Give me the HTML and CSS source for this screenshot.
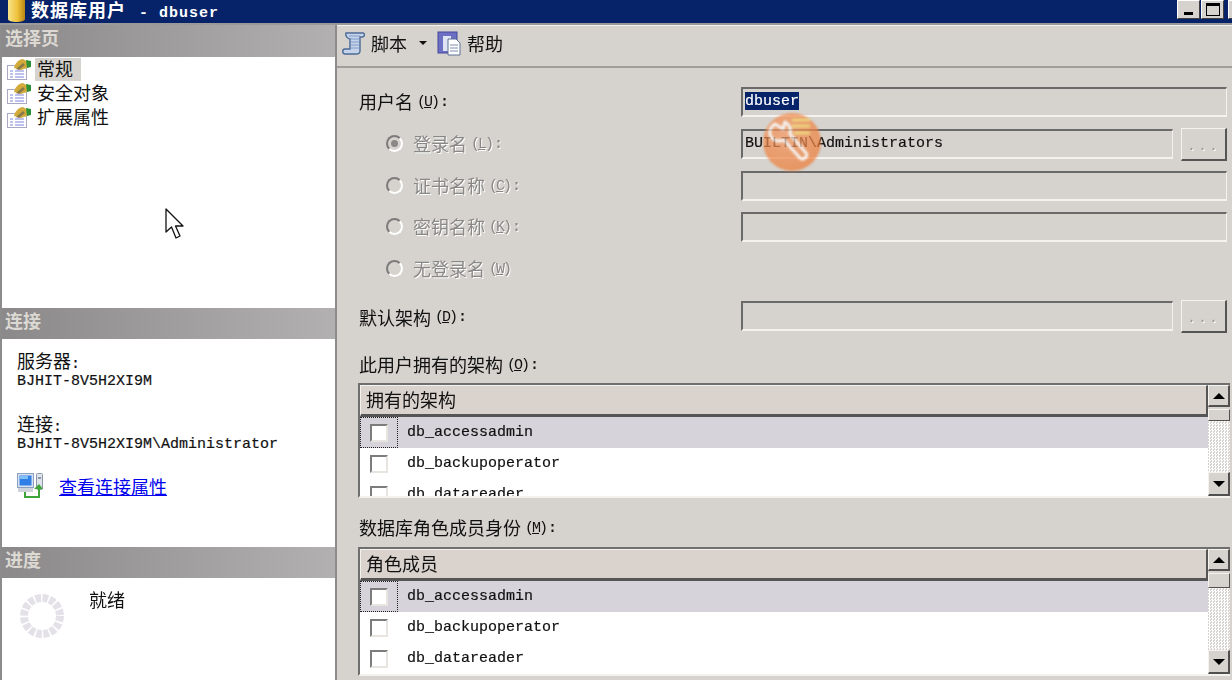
FILE: index.html
```html
<!DOCTYPE html>
<html lang="zh-CN">
<head>
<meta charset="utf-8">
<title>数据库用户 - dbuser</title>
<link rel="stylesheet" href="styles.css">
</head>
<body>
<svg class="defs" width="0" height="0" aria-hidden="true">
  <symbol id="page" viewBox="0 0 26 24">
    <rect x="2.500" y="8.500" width="19" height="14" fill="#fff" stroke="#a9a9c4"/>
    <path d="M5 14h3M5 17h3M5 20h3M10 14h9M10 17h9M10 20h9" stroke="#a8aee6" stroke-width="1.500"/>
    <path d="M9 11 C10 6 14 2 18 2 L23 5 L22 11 L16 13 Z" fill="#d2ab3a"/>
    <path d="M11 12 L18 6 L20 8 L14 13 Z" fill="#8b7a4a"/>
    <path d="M21 3 L26 4 L26 10 L22 11 Z" fill="#2f8f34"/>
  </symbol>
</svg>
<div class="window">
  <header class="titlebar">
    <svg class="dbicon" width="19" height="23" viewBox="0 0 19 23">
      <defs><linearGradient id="gold" x1="0" x2="1" y1="0" y2="0"><stop offset="0" stop-color="#f7e48a"/><stop offset=".55" stop-color="#efc23c"/><stop offset="1" stop-color="#b98412"/></linearGradient></defs>
      <path d="M1 0H18V19C18 21 14 22 9.500 22S1 21 1 19Z" fill="url(#gold)"/>
    </svg>
    <span class="title"><span>数据库用户</span><span class="title-mono"> - dbuser</span></span>
    <div class="winbtns">
      <button class="winbtn"><i class="gl-min"></i></button>
      <button class="winbtn"><i class="gl-max"></i></button>
      <button class="winbtn"></button>
    </div>
  </header>
  <div class="content">
    <aside class="sidebar">
      <h2 class="sec-head sec-first">选择页</h2>
      <ul class="pages">
        <li class="page"><svg class="page-ic" width="26" height="24"><use href="#page"/></svg><span class="page-txt sel">常规</span></li>
        <li class="page"><svg class="page-ic" width="26" height="24"><use href="#page"/></svg><span class="page-txt">安全对象</span></li>
        <li class="page"><svg class="page-ic" width="26" height="24"><use href="#page"/></svg><span class="page-txt">扩展属性</span></li>
      </ul>
      <h2 class="sec-head">连接</h2>
      <div class="conn">
        <div class="c-label">服务器<span class="mono">:</span></div>
        <div class="mono c-val">BJHIT-8V5H2XI9M</div>
        <div class="c-label c-gap">连接<span class="mono">:</span></div>
        <div class="mono c-val">BJHIT-8V5H2XI9M\Administrator</div>
        <div class="c-link">
          <svg width="26" height="26" viewBox="0 0 26 26">
            <rect x=".5" y=".5" width="16" height="14" fill="#d8e2f2" stroke="#8aa0c0"/>
            <rect x="2.500" y="2.500" width="12" height="10" fill="#2f7fe6"/>
            <rect x="3" y="3" width="8" height="3" fill="#7fc0f5"/>
            <rect x="1" y="15" width="15" height="4" fill="#cfd4dc"/>
            <rect x="19.500" y=".5" width="6" height="16" rx="1" fill="#dfe3ea" stroke="#8d96a8"/>
            <rect x="21" y="4" width="3" height="2" fill="#8d96a8"/>
            <path d="M8 19v5h14v-9" fill="none" stroke="#3fa53a" stroke-width="2"/>
            <path d="M17 16l5-5 4 5z" fill="#3fa53a"/>
          </svg>
          <a href="#" class="link">查看连接属性</a>
        </div>
      </div>
      <h2 class="sec-head">进度</h2>
      <div class="progress">
        <svg width="46" height="46" viewBox="0 0 46 46"><circle class="spin" cx="23" cy="23" r="18"/></svg>
        <span>就绪</span>
      </div>
    </aside>
    <main class="main">
      <div class="toolbar">
        <svg width="24" height="24" viewBox="0 0 24 24">
          <path d="M4 2H21C23 2 23 6 20 6H18V20C18 22 16 23 14 23H3C0 23 0 18 3 18H8V8C6 8 3 5 4 2Z" fill="#c6d4ea" stroke="#4c6a96" stroke-width="1.400"/>
          <path d="M7 5h11M9 8h8M9 11h8M9 14h8M9 17h8" stroke="#7f9ac8"/>
        </svg>
        <span class="tb-txt">脚本</span>
        <i class="tb-arrow"></i>
        <svg class="tb-help" width="25" height="25" viewBox="0 0 25 25">
          <rect x="1" y="1" width="19" height="21" fill="#6c6fc4" stroke="#44479a"/>
          <path d="M6 5h8v15H6z" fill="#dfe3f4"/>
          <path d="M11 8h8l4 4v12H11z" fill="#fff" stroke="#5b7096"/>
          <path d="M13 14h8M13 17h8M13 20h8" stroke="#7c8cb0"/>
        </svg>
        <span class="tb-txt">帮助</span>
      </div>
      <div class="form">
        <div class="row">
          <label class="lbl">用户名 <span class="key">(<u>U</u>)</span><span class="mono">:</span></label>
          <div class="field"><div class="input"><span class="hl">dbuser</span></div></div>
        </div>
        <div class="row row-g">
          <label class="lbl lbl-r off"><i class="radio on"></i>登录名 <span class="key">(<u>L</u>)</span><span class="mono">:</span></label>
          <div class="field"><div class="input">BUILTIN\Administrators</div><button class="dots">...</button></div>
        </div>
        <div class="row row-g">
          <label class="lbl lbl-r off"><i class="radio"></i>证书名称 <span class="key">(<u>C</u>)</span><span class="mono">:</span></label>
          <div class="field"><div class="input"></div></div>
        </div>
        <div class="row row-s">
          <label class="lbl lbl-r off"><i class="radio"></i>密钥名称 <span class="key">(<u>K</u>)</span><span class="mono">:</span></label>
          <div class="field"><div class="input"></div></div>
        </div>
        <div class="row row-g">
          <label class="lbl lbl-r off"><i class="radio"></i>无登录名 <span class="key">(<u>W</u>)</span></label>
        </div>
        <div class="row row-l">
          <label class="lbl">默认架构 <span class="key">(<u>D</u>)</span><span class="mono">:</span></label>
          <div class="field"><div class="input"></div><button class="dots">...</button></div>
        </div>
        <div class="cap cap-a">此用户拥有的架构 <span class="key">(<u>O</u>)</span><span class="mono">:</span></div>
        <div class="grid grid-a">
          <div class="g-list">
            <div class="g-head">拥有的架构</div>
            <div class="g-row cur"><span class="g-chk"><i class="chk"></i></span><span class="mono">db_accessadmin</span></div>
            <div class="g-row"><span class="g-chk"><i class="chk"></i></span><span class="mono">db_backupoperator</span></div>
            <div class="g-row"><span class="g-chk"><i class="chk"></i></span><span class="mono">db_datareader</span></div>
          </div>
          <div class="sbar">
            <button class="sb-btn"><i class="tri-up"></i></button>
            <span class="thumb"></span>
            <span class="track"></span>
            <button class="sb-btn"><i class="tri-dn"></i></button>
          </div>
        </div>
        <div class="cap cap-b">数据库角色成员身份 <span class="key">(<u>M</u>)</span><span class="mono">:</span></div>
        <div class="grid grid-b">
          <div class="g-list">
            <div class="g-head">角色成员</div>
            <div class="g-row cur"><span class="g-chk"><i class="chk"></i></span><span class="mono">db_accessadmin</span></div>
            <div class="g-row"><span class="g-chk"><i class="chk"></i></span><span class="mono">db_backupoperator</span></div>
            <div class="g-row"><span class="g-chk"><i class="chk"></i></span><span class="mono">db_datareader</span></div>
          </div>
          <div class="sbar">
            <button class="sb-btn"><i class="tri-up"></i></button>
            <span class="thumb"></span>
            <span class="track"></span>
            <button class="sb-btn"><i class="tri-dn"></i></button>
          </div>
        </div>
      </div>
    </main>
  </div>
  <svg class="badge" width="60" height="60" viewBox="0 0 60 60">
    <defs><radialGradient id="org" cx=".4" cy=".35" r=".75"><stop offset="0" stop-color="#f59a66"/><stop offset="1" stop-color="#ec7a34"/></radialGradient></defs>
    <circle cx="30" cy="30" r="29" fill="url(#org)"/>
    <path d="M30 8h18M30 14h18M32 21h16" stroke="#f8dc60" stroke-width="2.500"/>
    <path d="M13 12C7 16 6 23 11 27C15 30 19 29 22 28L38 46C41 49 47 44 44 41L28 22C29 18 28 13 23 10L21 17L13 12Z" fill="none" stroke="#fff" stroke-width="3" stroke-linejoin="round"/>
  </svg>
  <svg class="cursor" width="20" height="32" viewBox="0 0 20 32">
    <path d="M1 1V24L6.500 19L11 30L15 28L10.500 18H18Z" fill="#fff" stroke="#111" stroke-width="1.300" stroke-linejoin="round"/>
  </svg>
</div>
</body>
</html>
```
FILE: styles.css
```css
* { box-sizing: border-box; }
html, body { margin: 0; padding: 0; }
body {
  width: 1232px;
  height: 680px;
  overflow: hidden;
  background: #d6d3ce;
  font-family: "Noto Sans CJK SC", "Liberation Sans", sans-serif;
  font-size: 18px;
  line-height: 20px;
  color: #111;
}
.defs { position: absolute; }
.mono { font-family: "Liberation Mono", "Noto Sans CJK SC", monospace; font-size: 15px; -webkit-text-stroke: .2px currentColor; }
.window { position: relative; width: 1232px; height: 680px; overflow: hidden; display: flex; flex-direction: column; filter: blur(.4px); }

.titlebar { height: 23px; flex: none; display: flex; align-items: flex-start; background: #06236a; color: #fff; padding-left: 7px; overflow: hidden; }
.title { margin-left: 5px; font-weight: 700; line-height: 19px; letter-spacing: 1px; white-space: pre; }
.title-mono { font-family: "Liberation Mono", monospace; font-size: 15px; margin-left: 3px; }
.winbtns { margin-left: auto; margin-right: -19px; display: flex; gap: 1px; flex: none; }
.winbtn { width: 23px; height: 19px; padding: 0; margin: 0; background: #d6d3ce; border: 1px solid; border-color: #fff #404040 #404040 #fff; display: flex; align-items: center; justify-content: center; }
.winbtn:last-child { margin-left: 3px; }
.gl-min { width: 9px; height: 3px; background: #000; margin-top: 8px; }
.gl-max { width: 14px; height: 13px; border: 1px solid #000; border-top-width: 3px; }

.content { flex: 1; min-height: 0; display: flex; border-top: 2px solid #9a9a9a; }
.sidebar { width: 337px; flex: none; display: flex; flex-direction: column; background: #fff; border-left: 2px solid #8c8c8c; border-right: 2px solid #8c8c8c; }
.sec-head { height: 31px; margin: 0; padding: 0 0 0 3px; flex: none; font-size: 18px; line-height: 25px; font-weight: 700; color: #dcd8d2; background: linear-gradient(90deg, #8b898a, #b2b0b1); }
.sec-first { height: 32px; }
.pages { list-style: none; margin: 0; padding: 0; height: 251px; flex: none; }
.pages .page { height: 24px; display: flex; align-items: flex-start; padding-left: 3px; }
.page-ic { flex: none; }
.page-txt { margin: 1px 0 0 4px; padding: 0 8px 0 2px; height: 23px; line-height: 21px; }
.page-txt.sel { background: #d6d3ce; }
.conn { height: 208px; flex: none; padding: 11px 0 0 15px; }
.c-label { line-height: 20px; }
.c-val { line-height: 18px; margin-top: -2px; white-space: nowrap; }
.c-gap { margin-top: 22px; }
.c-link { display: flex; align-items: center; gap: 16px; margin-top: 19px; }
.link { color: #0000ee; text-decoration: underline; line-height: 24px; }
.progress { flex: 1; display: flex; align-items: flex-start; padding: 15px 0 0 17px; }
.progress span { margin-left: 24px; margin-top: -2px; line-height: 16px; }
.spin { fill: none; stroke: #e4e2e8; stroke-width: 8; stroke-dasharray: 5.5 1.57; }

.main { flex: 1; min-width: 0; display: flex; flex-direction: column; border-top: 1px solid #f4f2ee; }
.toolbar { height: 42px; flex: none; display: flex; align-items: center; padding: 0 0 6px 5px; border-bottom: 2px solid #a09e9a; }
.tb-txt { margin-left: 5px; }
.tb-arrow { margin-left: 12px; border: 4px solid transparent; border-top: 4px solid #111; border-bottom: 0; }
.tb-help { margin-left: 10px; }
.form { padding: 19px 2px 0 21px; }
.row { display: grid; grid-template-columns: 383px 1fr; align-items: center; height: 30px; padding-right: 3px; }
.row-g { margin-top: 12px; }
.row-s { margin-top: 11px; }
.row-l { margin-top: 17px; }
.lbl { padding-left: 1px; margin-bottom: 2px; white-space: nowrap; display: flex; align-items: center; }
.row-l .lbl { margin-bottom: 0; margin-top: 1px; }
.lbl .key, .lbl .mono, .cap .key, .cap .mono { margin-top: 3px; }
.lbl-r { padding-left: 28px; }
.off { color: #8a8886; text-shadow: 1px 1px 0 #fff; }
.key { font-family: "Liberation Mono", monospace; font-size: 15px; letter-spacing: -2px; margin: 0 2px 0 4px; }
.field { display: flex; gap: 8px; height: 30px; }
.input { flex: 1; min-width: 0; border: 2px solid; border-color: #6a6a6a #f4f2ee #f4f2ee #6a6a6a; border-right-width: 1px; padding: 4px 0 0 2px; font-family: "Liberation Mono", monospace; font-size: 15px; line-height: 18px; -webkit-text-stroke: .2px currentColor; white-space: nowrap; }
.hl { background: #06236a; color: #fff; display: inline-block; line-height: 16px; padding-top: 2px; margin-top: -2px; }
.dots { width: 46px; height: 33px; margin-top: -1px; flex: none; background: #d6d3ce; border: 1px solid; border-color: #f4f2ee #555 #555 #f4f2ee; border-width: 1px 2px 2px 1px; color: #999; font: 15px "Liberation Mono", monospace; letter-spacing: 2px; padding: 4px 0 0; text-shadow: 1px 1px 0 #fff; }
.radio { width: 17px; height: 17px; margin-right: 10px; flex: none; border: 2px solid; border-color: #7c7c7c #fff #fff #7c7c7c; border-radius: 50%; display: flex; align-items: center; justify-content: center; }
.radio.on::after { content: ""; width: 7px; height: 7px; border-radius: 50%; background: #8a8886; }
.cap { padding-left: 1px; height: 20px; white-space: nowrap; display: flex; align-items: center; }
.cap-a { margin-top: 23px; margin-bottom: 9px; }
.cap-b { margin-top: 19px; margin-bottom: 10px; }
.grid { display: flex; border: 2px solid; border-right: 0; border-color: #6f6f6f #f4f2ee #f4f2ee #6f6f6f; overflow: hidden; background: #fff; }
.grid-a { height: 115px; }
.grid-b { height: 129px; }
.g-list { flex: 1; min-width: 0; overflow: hidden; }
.g-head { height: 32px; padding-left: 5px; line-height: 27px; background: #d9d2cd; border: 1px solid; border-color: #f4f2ee #555 #555 #f4f2ee; border-width: 1px 2px 3px 1px; }
.g-row { height: 31px; display: flex; align-items: center; white-space: nowrap; }
.g-row.cur { background: #d6d4da; }
.g-chk { width: 38px; height: 31px; margin-right: 9px; flex: none; display: flex; align-items: center; justify-content: center; }
.cur .g-chk { outline: 1px dotted #222; outline-offset: -1px; }
.chk { width: 18px; height: 18px; background: #fff; border: 2px solid; border-color: #7c7c7c #e8e4e0 #e8e4e0 #7c7c7c; }
.sbar { width: 22px; flex: none; display: flex; flex-direction: column; background: #d6d3ce; }
.sb-btn { width: 22px; height: 22px; flex: none; padding: 0; background: #d6d3ce; border: 1px solid; border-color: #f4f2ee #505050 #505050 #f4f2ee; border-width: 1px 2px 2px 1px; display: flex; align-items: center; justify-content: center; }
.sb-btn:last-child { height: 24px; }
.tri-up { border: 6px solid transparent; border-top: 0; border-bottom: 6px solid #000; }
.tri-dn { border: 6px solid transparent; border-bottom: 0; border-top: 6px solid #000; }
.thumb { height: 12px; margin-top: 2px; flex: none; background: #d6d3ce; border: 1px solid; border-color: #f4f2ee #505050 #505050 #f4f2ee; }
.grid-b .thumb { height: 15px; }
.track { flex: 1; background: repeating-conic-gradient(#fff 0 25%, #d6d3ce 0 50%) 0 0 / 3px 3px; }

.badge { position: absolute; left: 762px; top: 112px; opacity: .72; filter: blur(1px); }
.cursor { position: absolute; left: 165px; top: 208px; }
```
